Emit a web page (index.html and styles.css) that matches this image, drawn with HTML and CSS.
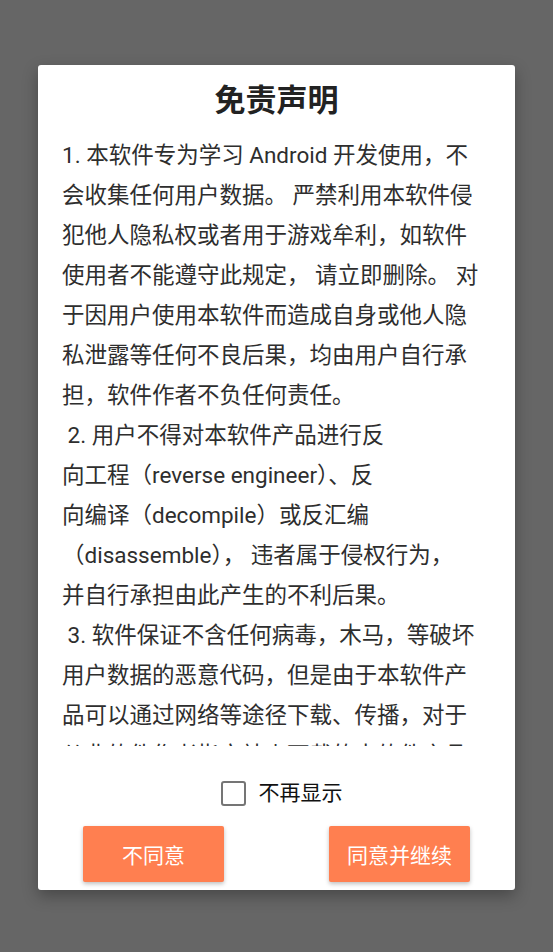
FILE: index.html
```html
<!DOCTYPE html>
<html lang="zh-CN">
<head>
  <meta charset="UTF-8" />
  <meta name="viewport" content="width=device-width, initial-scale=1.0"/>
  <title>免责声明</title>
  <link rel="stylesheet" href="styles.css">
</head>
<body>

  <!-- Disclaimer Dialog -->
  <div class="dialog" id="disclaimerDialog">
    <h2 class="dialog-title">免责声明</h2>

    <div class="dialog-body">
      <p class="terms">1. 本软件专为学习 Android 开发使用，不<br>会收集任何用户数据。 严禁利用本软件侵<br>犯他人隐私权或者用于游戏牟利，如软件<br>使用者不能遵守此规定， 请立即删除。 对<br>于因用户使用本软件而造成自身或他人隐<br>私泄露等任何不良后果，均由用户自行承<br>担，软件作者不负任何责任。<br>&nbsp;2. 用户不得对本软件产品进行反<br>向工程（reverse engineer）、反<br>向编译（decompile）或反汇编<br>（disassemble）， 违者属于侵权行为，<br>并自行承担由此产生的不利后果。<br>&nbsp;3. 软件保证不含任何病毒，木马，等破坏<br>用户数据的恶意代码，但是由于本软件产<br>品可以通过网络等途径下载、传播，对于<br>从非软件作者指定站点下载的本软件产品<br>作者无法保证该软件是否感染计算机病毒</p>
    </div>

    <label class="remember">
      <input type="checkbox" id="dontShowAgain">
      <span class="check-box"></span>
      <span class="remember-text">不再显示</span>
    </label>

    <div class="dialog-actions">
      <button class="btn" id="disagreeBtn">不同意</button>
      <button class="btn" id="agreeBtn">同意并继续</button>
    </div>
  </div>

  <script>
    document.getElementById('disagreeBtn').onclick = function () {
      document.getElementById('disclaimerDialog').style.display = 'none';
    };

    document.getElementById('agreeBtn').onclick = function () {
      if (document.getElementById('dontShowAgain').checked) {
        localStorage.setItem('hideDisclaimer', '1');
      }
      document.getElementById('disclaimerDialog').style.display = 'none';
    };
  </script>
</body>
</html>
```

FILE: styles.css
```css
body {
  font-family: Roboto, "Noto Sans CJK SC", sans-serif;
  background-color: #666;
  margin: 0;
  height: 952px;
  display: flex;
  justify-content: center;
  align-items: flex-start;
  overflow: hidden;
}
.dialog {
  margin-top: 65px;
  width: 477px;
  height: 825px;
  box-sizing: border-box;
  background: #fff;
  border-radius: 3px;
  box-shadow: 0 6px 16px rgba(0, 0, 0, 0.3);
  display: flex;
  flex-direction: column;
  padding: 20px 0 8px;
}
.dialog-title {
  margin: 0;
  font-size: 31px;
  line-height: 32px;
  font-weight: bold;
  text-align: center;
  color: #222;
}
.dialog-body {
  margin-top: 18px;
  height: 611px;
  overflow: hidden;
  padding: 0 24px;
}
.terms {
  margin: 0;
  font-size: 22.5px;
  line-height: 40px;
  color: #2e2e2e;
  white-space: nowrap;
}
.remember {
  margin-top: 32px;
  display: flex;
  align-items: center;
  justify-content: center;
  gap: 13px;
  padding-left: 10px;
  cursor: pointer;
}
.remember input {
  display: none;
}
.remember-text {
  font-size: 21px;
  line-height: 30px;
  color: #111;
}
.check-box {
  width: 21px;
  height: 21px;
  border: 2.5px solid #757575;
  border-radius: 3px;
}
.remember input:checked + .check-box {
  background: #ff7f50;
  border-color: #ff7f50;
}
.dialog-actions {
  margin-top: 18px;
  display: flex;
  justify-content: space-between;
  padding: 0 45px;
}
.btn {
  width: 141px;
  height: 56px;
  background-color: #ff7f50;
  color: white;
  border: none;
  border-radius: 2px;
  font-family: inherit;
  font-size: 21px;
  box-shadow: 0 2px 4px rgba(0, 0, 0, 0.25);
  cursor: pointer;
}
.btn:hover {
  background-color: #f26d3d;
}
```
